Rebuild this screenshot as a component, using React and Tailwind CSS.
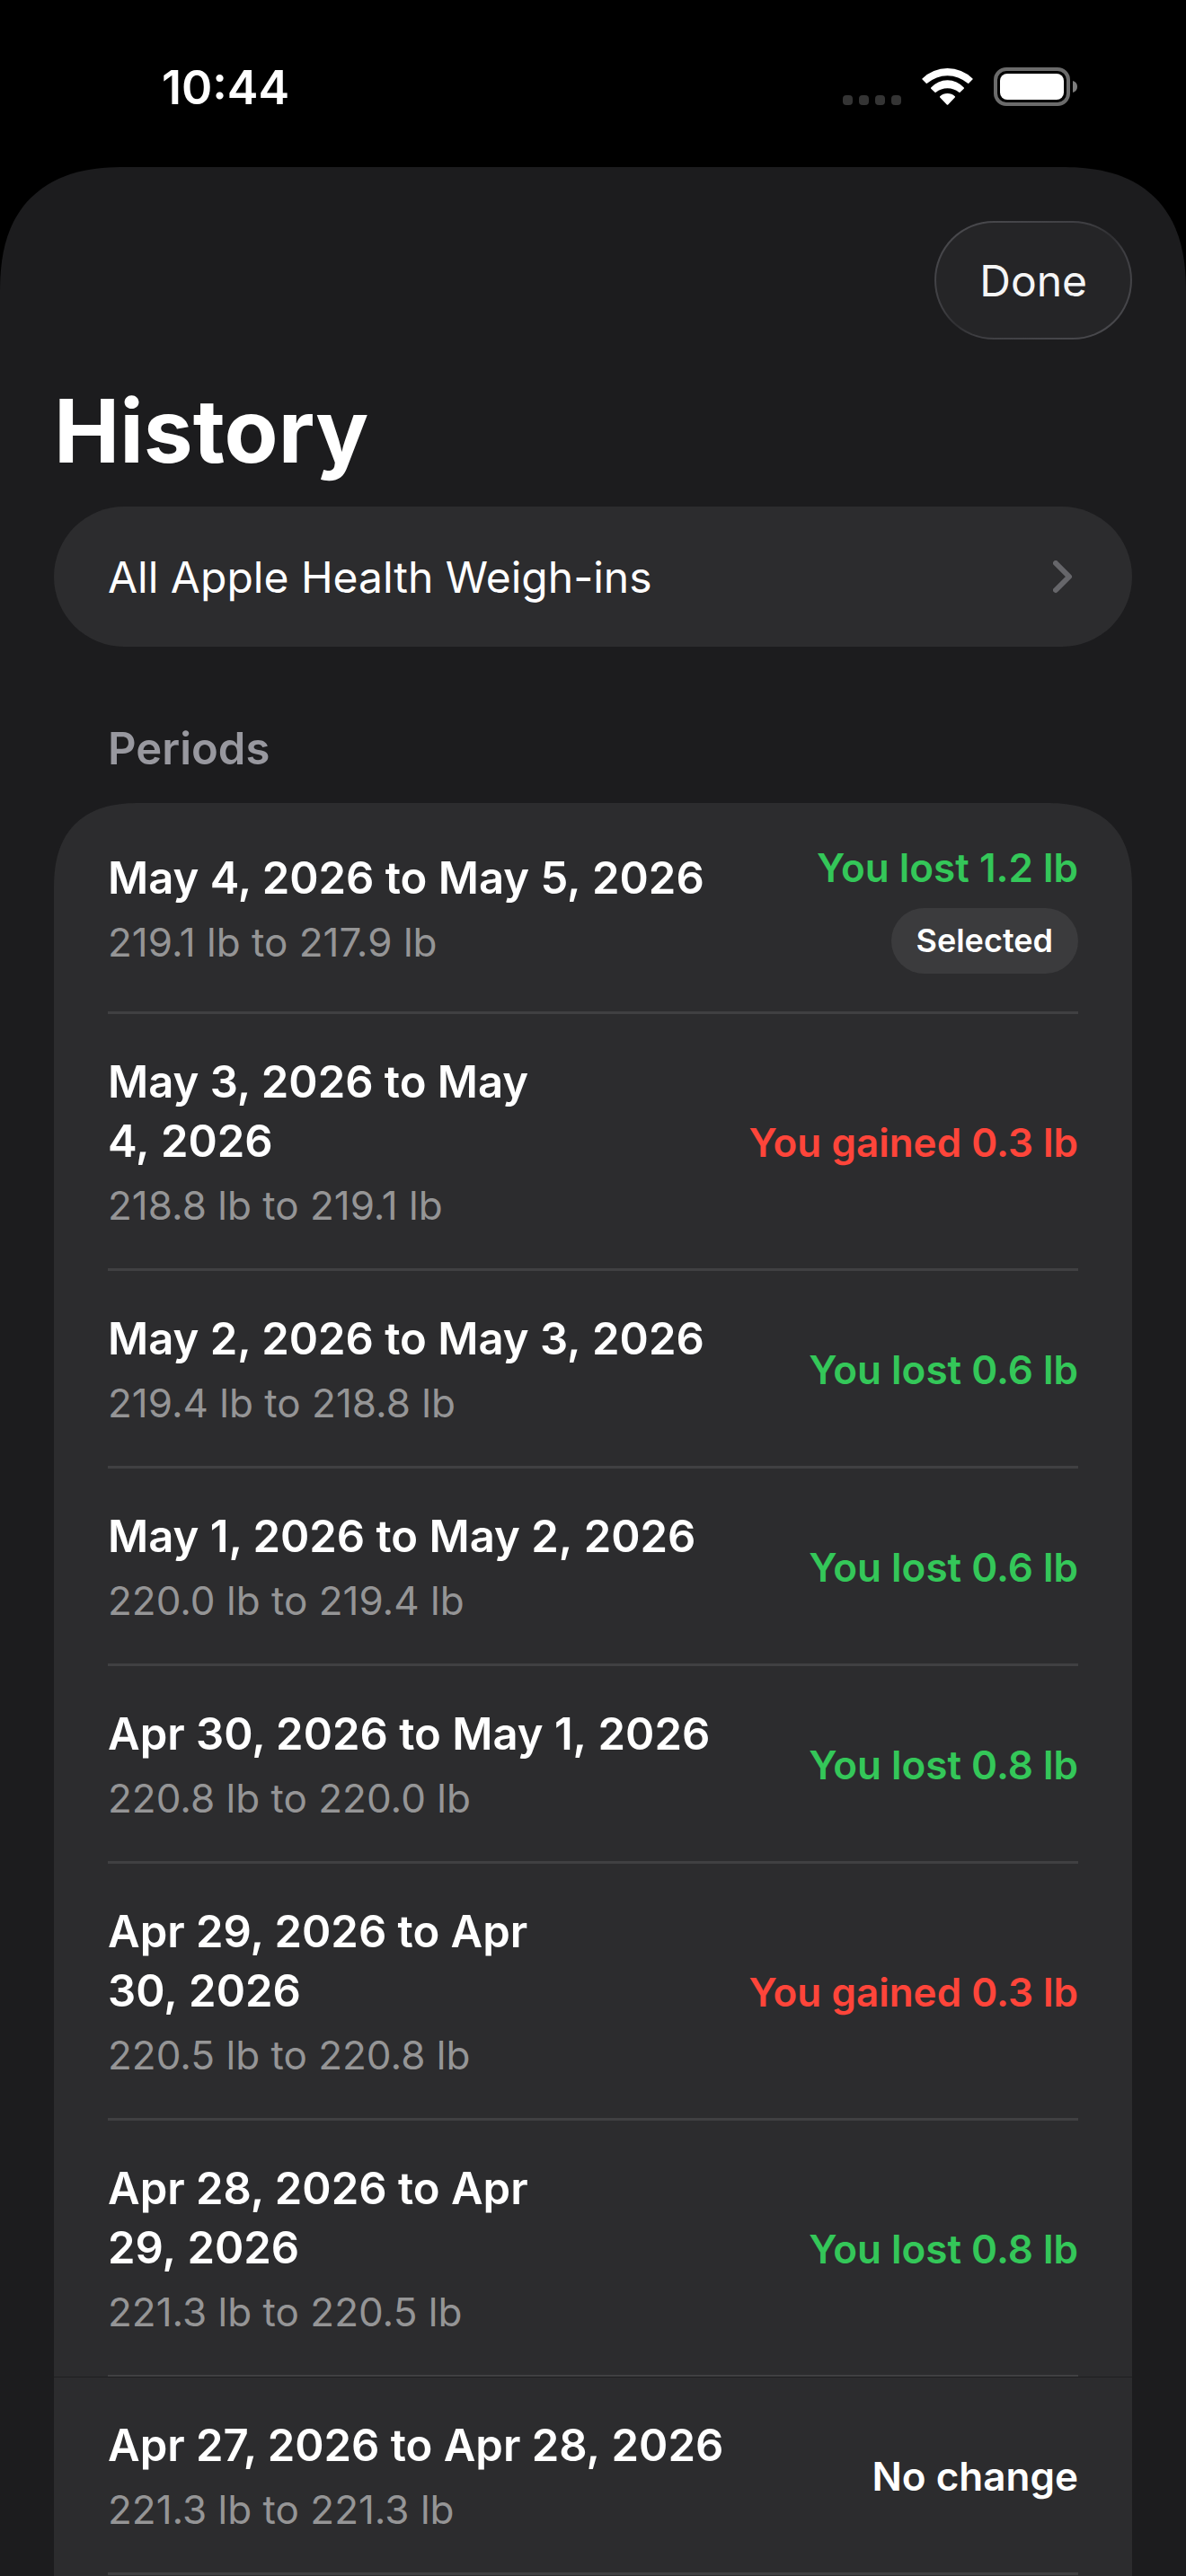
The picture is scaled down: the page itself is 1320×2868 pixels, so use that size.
import React, { useState } from "react";

// "\u00a0" keeps the day and the year on the same line when a title wraps
const periods = [
  {
    title: "May 4, 2026 to May 5,\u00a02026",
    weights: "219.1 lb to 217.9 lb",
    change: "You lost 1.2 lb",
    trend: "lost",
  },
  {
    title: "May 3, 2026 to May 4,\u00a02026",
    weights: "218.8 lb to 219.1 lb",
    change: "You gained 0.3 lb",
    trend: "gained",
  },
  {
    title: "May 2, 2026 to May 3,\u00a02026",
    weights: "219.4 lb to 218.8 lb",
    change: "You lost 0.6 lb",
    trend: "lost",
  },
  {
    title: "May 1, 2026 to May 2,\u00a02026",
    weights: "220.0 lb to 219.4 lb",
    change: "You lost 0.6 lb",
    trend: "lost",
  },
  {
    title: "Apr 30, 2026 to May 1,\u00a02026",
    weights: "220.8 lb to 220.0 lb",
    change: "You lost 0.8 lb",
    trend: "lost",
  },
  {
    title: "Apr 29, 2026 to Apr 30,\u00a02026",
    weights: "220.5 lb to 220.8 lb",
    change: "You gained 0.3 lb",
    trend: "gained",
  },
  {
    title: "Apr 28, 2026 to Apr 29,\u00a02026",
    weights: "221.3 lb to 220.5 lb",
    change: "You lost 0.8 lb",
    trend: "lost",
  },
  {
    title: "Apr 27, 2026 to Apr 28,\u00a02026",
    weights: "221.3 lb to 221.3 lb",
    change: "No change",
    trend: "same",
  },
];

const trendColors = {
  lost: "text-[#34c759]",
  gained: "text-[#ff453a]",
  same: "text-white",
};

const StatusBar = () => (
  <div className="flex h-[186px] items-start justify-between pt-[68px] pr-[120px] pl-[180px]">
    <span className="text-[52px] leading-[60px] font-semibold">10:44</span>
    <div className="flex items-center pt-[7px]">
      <svg width="66" height="43" viewBox="0 0 66 43" fill="#343434">
        <rect x="0" y="31" width="11" height="11" rx="4" />
        <rect x="18" y="31" width="11" height="11" rx="4" />
        <rect x="36" y="31" width="11" height="11" rx="4" />
        <rect x="54" y="31" width="11" height="11" rx="4" />
      </svg>
      <svg className="ml-[22px]" width="57" height="43" viewBox="0 0 57 43" fill="#fff">
        <path d="M0.5 12.4A40 40 0 0 1 56.5 12.4Q57.1 13 56.4 13.6L52.2 17.7Q51.5 18.3 50.8 17.6A34 34 0 0 0 6.2 17.6Q5.5 18.3 4.8 17.7L0.6 13.6Q-0.1 13 0.5 12.4Z" />
        <path d="M10.2 22.6A24.4 24.4 0 0 1 46.8 22.6Q47.3 23.1 46.8 23.7L42.5 27.8Q41.9 28.3 41.3 27.8A20 20 0 0 0 15.7 27.8Q15.1 28.3 14.5 27.8L10.2 23.7Q9.7 23.1 10.2 22.6Z" />
        <path d="M20.2 32.3A12 12 0 0 1 36.8 32.3Q37.4 32.9 36.8 33.5L29.2 41.4Q28.5 42.1 27.8 41.4L20.2 33.5Q19.6 32.9 20.2 32.3Z" />
      </svg>
      <svg className="ml-[23px]" width="94" height="43" viewBox="0 0 94 43">
        <rect x="2" y="2" width="81" height="39" rx="12" fill="none" stroke="#6b6b6b" strokeWidth="4" />
        <rect x="7" y="7" width="71" height="29" rx="8" fill="#fff" />
        <path d="M88 15C91.5 16 93 18.5 93 21.5C93 24.5 91.5 27 88 28Z" fill="#7d7d7d" />
      </svg>
    </div>
  </div>
);

const PeriodRow = ({ period, selected, seam, onSelect }) => (
  <li className={seam ? "border-b border-[#1f1f21]" : ""}>
    <button
      type="button"
      aria-pressed={selected}
      onClick={onSelect}
      className="block w-full px-[60px] text-left"
    >
      <span
        className={`flex items-center justify-between gap-24 border-[#404042] pt-[43px] pb-10 ${
          seam ? "border-b-2" : "border-b-3"
        }`}
      >
        <span className="flex flex-col gap-2">
          <span className="text-[49px] leading-[66px] font-semibold">
            {period.title}
          </span>
          <span className="text-[44px] leading-[60px] text-[#959596]">
            {period.weights}
          </span>
        </span>
        <span className="flex shrink-0 flex-col items-end gap-4">
          <span
            className={`text-[44px] leading-[58px] font-semibold ${trendColors[period.trend]}`}
          >
            {period.change}
          </span>
          {selected && (
            <span className="mb-0.5 rounded-full bg-[#3b3b3d] px-7 text-[36px] leading-[73px] font-semibold">
              Selected
            </span>
          )}
        </span>
      </span>
    </button>
  </li>
);

const App = () => {
  const [selectedIndex, setSelectedIndex] = useState(0);

  return (
    <div className="flex min-h-screen flex-col bg-black font-['Inter',sans-serif] text-white">
      <StatusBar />

      {/* Sheet */}
      <main className="flex flex-1 flex-col rounded-t-[116px] bg-[#1c1c1e] px-[60px] pt-[60px] supports-[corner-shape:squircle]:rounded-t-[140px] supports-[corner-shape:squircle]:[corner-shape:superellipse(1.3)]">
        <div className="flex justify-end">
          <button
            type="button"
            className="h-[132px] rounded-full border-2 border-transparent px-12 pt-0.5 text-[48px] text-[#f5f5f5] [background:linear-gradient(#252527,#252527)_padding-box,linear-gradient(150deg,#4c4c50,#3e3e42_40%,#303033_50%,#3e3e42_60%,#4c4c50)_border-box]"
          >
            Done
          </button>
        </div>

        <h1 className="pt-[42px] pb-6 text-[98px] leading-[120px] font-bold">
          History
        </h1>

        <a
          href="#weigh-ins"
          className="flex h-[156px] items-center justify-between rounded-full bg-[#2c2c2e] pt-0.5 pr-16 pl-[60px] text-[48px]"
        >
          All Apple Health Weigh-ins
          <svg width="24" height="38" viewBox="0 0 24 38" fill="none">
            <path
              d="M3 3L18 18L3 33"
              stroke="#66666a"
              strokeWidth="6"
              strokeLinecap="round"
              strokeLinejoin="round"
            />
          </svg>
        </a>

        <h2 className="px-[60px] pt-[81px] pb-[27px] text-[49px] leading-[66px] font-semibold text-[#98989f]">
          Periods
        </h2>

        <ul className="flex-1 overflow-hidden rounded-t-[78px] bg-[#2c2c2e] supports-[corner-shape:squircle]:rounded-t-[96px] supports-[corner-shape:squircle]:[corner-shape:superellipse(1.3)]">
          {periods.map((period, index) => (
            <PeriodRow
              key={period.title}
              period={period}
              selected={index === selectedIndex}
              seam={index === 6}
              onSelect={() => setSelectedIndex(index)}
            />
          ))}
        </ul>
      </main>
    </div>
  );
};

export default App;
